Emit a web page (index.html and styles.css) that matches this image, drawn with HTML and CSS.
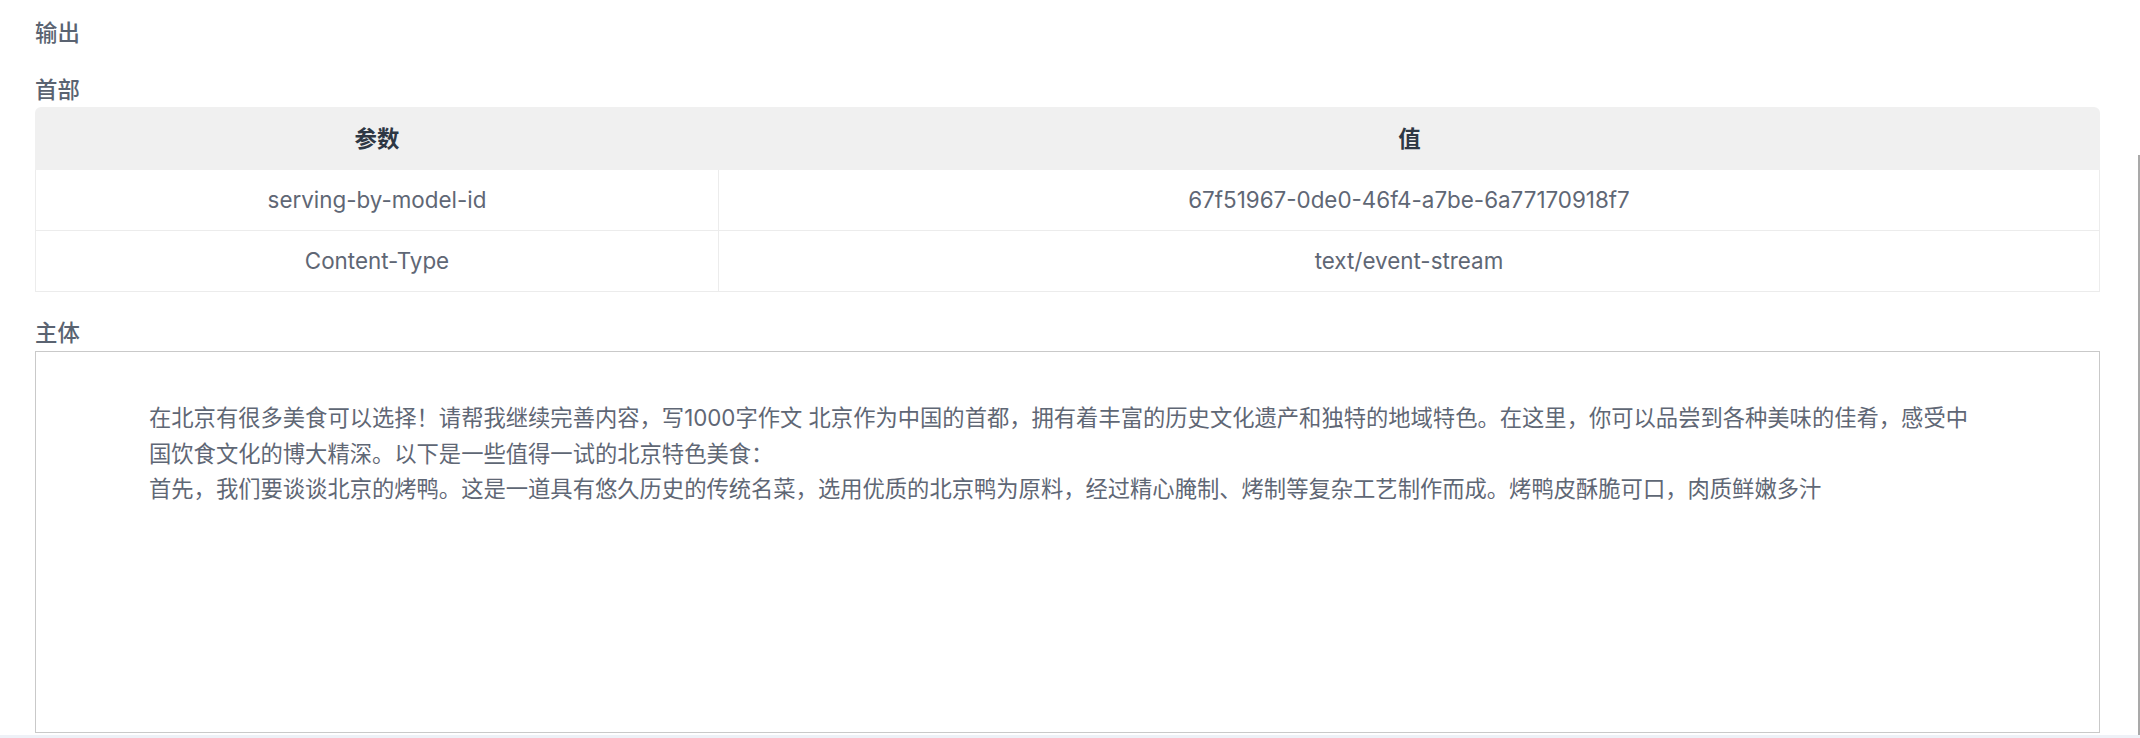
FILE: index.html
```html
<!DOCTYPE html>
<html>
<head>
  <title>Response Output</title>
  <link rel="stylesheet" href="styles.css">
</head>
<body>

  <div class="output">
    <div class="title">输出</div>

    <div class="label">首部</div>
    <table class="headers">
      <thead>
        <tr>
          <th class="key">参数</th>
          <th>值</th>
        </tr>
      </thead>
      <tbody>
        <tr>
          <td class="key">serving-by-model-id</td>
          <td>67f51967-0de0-46f4-a7be-6a77170918f7</td>
        </tr>
        <tr>
          <td class="key">Content-Type</td>
          <td>text/event-stream</td>
        </tr>
      </tbody>
    </table>

    <div class="label body-label">主体</div>
    <div class="body-box">
      <div class="body-text">在北京有很多美食可以选择！请帮我继续完善内容，写1000字作文 北京作为中国的首都，拥有着丰富的历史文化遗产和独特的地域特色。在这里，你可以品尝到各种美味的佳肴，感受中<br>国饮食文化的博大精深。以下是一些值得一试的北京特色美食：<br>首先，我们要谈谈北京的烤鸭。这是一道具有悠久历史的传统名菜，选用优质的北京鸭为原料，经过精心腌制、烤制等复杂工艺制作而成。烤鸭皮酥脆可口，肉质鲜嫩多汁</div>
    </div>
  </div>

  <!-- scrollbar edge of the outer panel -->
  <div class="scroll-edge"></div>
  <div class="bottom-strip"></div>

</body>
</html>
```

FILE: styles.css
```css
html, body {
  margin: 0;
  height: 100%;
  overflow: hidden;
}

body {
  position: relative;
  background-color: #fff;
  font-family: "Inter", "Noto Sans CJK SC", sans-serif;
  font-size: 22.4px;
  line-height: 35.4px;
  color: #5f6775;
}

.output {
  padding: 15px 40px 0 35px;
}

.title,
.label {
  font-weight: 500;
  color: #5a6371;
}

.label {
  margin-top: 22px;
}

.body-label {
  margin-top: 23px;
}

.headers {
  width: 100%;
  border-collapse: separate;
  border-spacing: 0;
  margin-top: -1px;
}

.headers th {
  height: 63px;
  padding: 0;
  background-color: #f0f0f0;
  font-weight: 600;
  color: #2e3744;
  text-align: center;
}

.headers th:first-child {
  border-top-left-radius: 6px;
}

.headers th:last-child {
  border-top-right-radius: 6px;
}

.headers td {
  height: 60px;
  padding: 0;
  text-align: center;
  border-bottom: 1px solid #ececec;
  border-right: 1px solid #ececec;
}

.headers td:first-child {
  border-left: 1px solid #ececec;
}

.headers .key {
  width: 682px;
}

.body-box {
  height: 380px;
  border: 1px solid #c9c9c9;
  margin-top: 1px;
}

.body-text {
  padding: 48px 0 0 113px;
  font-size: 22.3px;
  white-space: nowrap;
}

.scroll-edge {
  position: absolute;
  top: 155px;
  right: 0;
  width: 2px;
  height: 580px;
  background-color: #a9a9a9;
}

.bottom-strip {
  position: absolute;
  left: 0;
  right: 0;
  bottom: 0;
  height: 3px;
  background-color: #eef1f7;
}
```
